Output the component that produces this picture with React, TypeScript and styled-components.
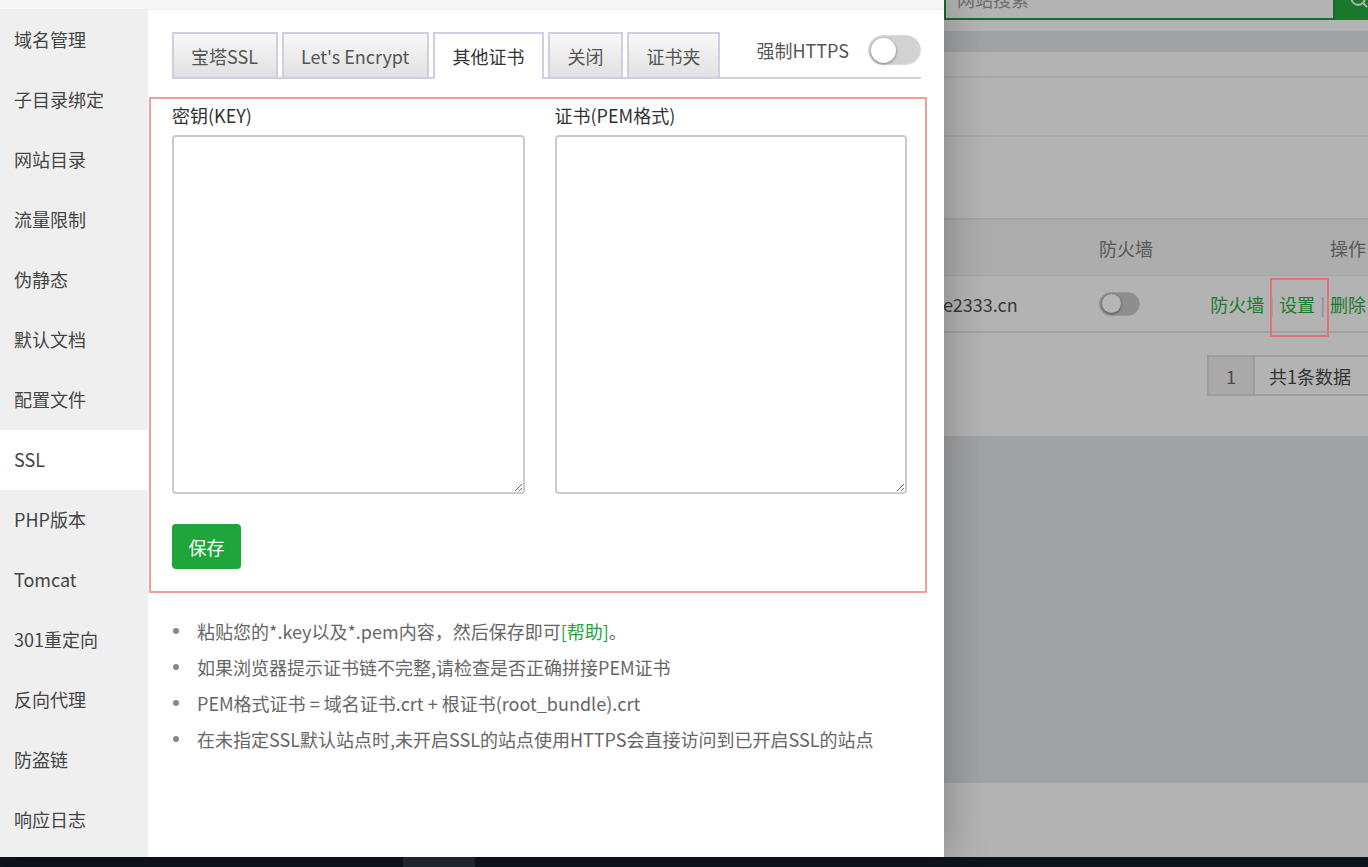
import * as React from "react";
import styled, { createGlobalStyle } from "styled-components";
import { Search } from "lucide-react";

const GlobalStyle = createGlobalStyle`
  html, body {
    margin: 0;
    padding: 0;
  }
  body {
    font-family: "Noto Sans CJK SC", "Noto Sans", sans-serif;
    background: #a0a3a5;
    overflow: hidden;
  }
  * {
    box-sizing: border-box;
  }
`;

const Shell = styled.div`
  width: 1368px;
  height: 867px;
  display: flex;
  flex-direction: column;
`;

const Main = styled.div`
  display: flex;
  height: 857px;
`;

const Modal = styled.div`
  position: relative;
  z-index: 2;
  width: 944px;
  flex: none;
  display: flex;
  flex-direction: column;
  background: #fff;
  box-shadow: 2px 0 40px rgba(0, 0, 0, 0.28);
`;

const TopStrip = styled.div`
  height: 10px;
  background: #f7f7f7;
  border-bottom: 1px solid #ececec;
`;

const ModalBody = styled.div`
  flex: 1;
  display: flex;
  min-height: 0;
`;

const Sidebar = styled.nav`
  width: 148px;
  flex: none;
  background: #efefef;
`;

const NavItem = styled.div<{ $active?: boolean }>`
  height: 60px;
  display: flex;
  align-items: center;
  padding-left: 14px;
  padding-bottom: 2px;
  font-size: 18px;
  color: #444;
  background: ${(p) => (p.$active ? "#fff" : "transparent")};
`;

const Content = styled.div`
  flex: 1;
  padding: 22px 23px 0 24px;
`;

const TabBar = styled.div`
  display: flex;
  align-items: flex-start;
  height: 47px;
  border-bottom: 2px solid #d0cee0;
`;

const Tab = styled.div<{ $active?: boolean }>`
  height: ${(p) => (p.$active ? "47px" : "45px")};
  padding: 0 18px 0 17px;
  margin-right: 4px;
  border: 2px solid #d0cee0;
  border-bottom: none;
  font-size: 18px;
  line-height: 45px;
  color: ${(p) => (p.$active ? "#333" : "#555")};
  background: ${(p) =>
    p.$active ? "#fff" : "linear-gradient(#f8f8f8, #e1e1e1)"};
  white-space: nowrap;
`;

const SwitchGroup = styled.div`
  margin-left: auto;
  margin-top: 1px;
  height: 34px;
  display: flex;
  align-items: center;
  gap: 19px;
  font-size: 18px;
  color: #555;
`;

const Toggle = styled.div<{ $dim?: boolean }>`
  width: ${(p) => (p.$dim ? "41px" : "53px")};
  height: ${(p) => (p.$dim ? "24px" : "30px")};
  border-radius: 15px;
  padding: 2px;
  display: flex;
  align-items: center;
  background: ${(p) => (p.$dim ? "#8e8e8e" : "#d2d2d2")};
  border: 1px solid ${(p) => (p.$dim ? "#999" : "#dadada")};
`;

const Knob = styled.span<{ $dim?: boolean }>`
  width: ${(p) => (p.$dim ? "19px" : "25px")};
  height: ${(p) => (p.$dim ? "19px" : "25px")};
  border-radius: 50%;
  background: ${(p) => (p.$dim ? "#b5b5b5" : "#fff")};
  box-shadow: 0 1px 3px rgba(0, 0, 0, 0.45);
`;

const FormBox = styled.div`
  margin: 18px -6px 0 -23px;
  border: 2px solid #f39c9c;
  padding: 4px 18px 22px 21px;
`;

const Fields = styled.div`
  display: grid;
  grid-template-columns: 1fr 1fr;
  gap: 30px;
`;

const Label = styled.div`
  font-size: 18px;
  line-height: 24px;
  color: #333;
  margin-bottom: 8px;
`;

const TextArea = styled.textarea`
  display: block;
  width: 100%;
  height: 359px;
  border: 2px solid #ccc;
  border-radius: 4px;
  resize: both;
  outline: none;
`;

const SaveButton = styled.button`
  margin-top: 30px;
  width: 69px;
  height: 45px;
  border: none;
  border-radius: 4px;
  background: #20a53a;
  color: #fff;
  font-family: inherit;
  font-size: 18px;
`;

const Notes = styled.ul`
  margin: 20px 0 0;
  padding: 0;
  list-style: none;
`;

const Note = styled.li`
  position: relative;
  padding-left: 25px;
  line-height: 36px;
  font-size: 18px;
  color: #666;
  white-space: nowrap;

  &::before {
    content: "";
    position: absolute;
    left: 1px;
    top: 15px;
    width: 6px;
    height: 6px;
    border-radius: 50%;
    background: #888;
  }
`;

const HelpLink = styled.span`
  color: #20a53a;
`;

/* dimmed page behind the modal */

const Backdrop = styled.div`
  flex: 1;
  min-width: 0;
  display: flex;
  flex-direction: column;
  background: #a0a3a5;
`;

const SearchRow = styled.div`
  display: flex;
  height: 42px;
  margin-top: -22px;
  flex: none;
`;

const SearchInput = styled.div`
  flex: 1;
  min-width: 0;
  border: 2px solid #1c6b2c;
  background: #b3b3b3;
  color: #6d6d6d;
  font-size: 18px;
  line-height: 38px;
  padding-left: 11px;
`;

const SearchButton = styled.div`
  width: 33px;
  flex: none;
  background: #1a782c;
  color: #b0b0b0;
  display: flex;
  align-items: center;
  padding-left: 14px;

  svg {
    flex: none;
  }
`;

const Strip = styled.div<{ $h: number; $bg: string }>`
  height: ${(p) => p.$h}px;
  background: ${(p) => p.$bg};
  flex: none;
`;

const Card = styled.div`
  height: 384px;
  flex: none;
  background: #b3b3b3;
`;

const CardRow = styled.div<{ $h: number }>`
  height: ${(p) => p.$h}px;
  border-bottom: 2px solid #a9a9a9;
`;

const TableHead = styled.div`
  margin-top: 81px;
  display: grid;
  grid-template-columns: 155px 110px minmax(0, 1fr);
  align-items: center;
  height: 58px;
  border-top: 2px solid #a2a2a2;
  border-bottom: 1px solid #a7a7a7;
  background: #adadad;
  font-size: 18px;
  color: #585858;
`;

const TableRow = styled.div`
  display: grid;
  grid-template-columns: 155px 110px minmax(0, 1fr);
  align-items: center;
  height: 57px;
  border-bottom: 2px solid #a2a2a2;
  font-size: 18px;
  color: #3a3a3a;
`;

const NameCell = styled.div`
  margin-left: -11px;
  white-space: nowrap;
`;

const OpsCell = styled.div`
  position: relative;
  text-align: right;
  padding-right: 2px;
  white-space: nowrap;
`;

const OpLink = styled.span`
  color: #1b7a2b;
`;

const Sep = styled.span`
  color: #888;
  margin: 0 5px;
`;

const Annotation = styled.span`
  position: absolute;
  left: 61px;
  top: -13px;
  width: 59px;
  height: 59px;
  border: 2px solid #e07373;
`;

const Pager = styled.div`
  margin: 22px 0 0 263px;
  display: flex;
  height: 41px;
  border: 2px solid #9d9d9d;
  border-right: none;
  font-size: 18px;
  white-space: nowrap;
`;

const PageCell = styled.div<{ $current?: boolean }>`
  display: flex;
  align-items: center;
  justify-content: center;
  padding: 0 ${(p) => (p.$current ? "17px" : "14px")};
  background: ${(p) => (p.$current ? "#a9a9a9" : "#b3b3b3")};
  color: ${(p) => (p.$current ? "#4a4a4a" : "#333")};
  border-right: ${(p) => (p.$current ? "2px solid #9d9d9d" : "none")};
`;

const Taskbar = styled.div`
  height: 10px;
  background: #0e141b;
  display: flex;
`;

const TaskItem = styled.div`
  margin-left: 403px;
  width: 72px;
  background: #252a31;
`;

const navItems = [
  "域名管理",
  "子目录绑定",
  "网站目录",
  "流量限制",
  "伪静态",
  "默认文档",
  "配置文件",
  "SSL",
  "PHP版本",
  "Tomcat",
  "301重定向",
  "反向代理",
  "防盗链",
  "响应日志",
];

const tabs = ["宝塔SSL", "Let's Encrypt", "其他证书", "关闭", "证书夹"];

const App = () => {
  return (
    <Shell>
      <GlobalStyle />
      <Main>
        <Modal>
          <TopStrip />
          <ModalBody>
            <Sidebar>
              {navItems.map((item) => (
                <NavItem key={item} $active={item === "SSL"}>
                  {item}
                </NavItem>
              ))}
            </Sidebar>
            <Content>
              <TabBar>
                {tabs.map((t) => (
                  <Tab key={t} $active={t === "其他证书"}>
                    {t}
                  </Tab>
                ))}
                <SwitchGroup>
                  强制HTTPS
                  <Toggle>
                    <Knob />
                  </Toggle>
                </SwitchGroup>
              </TabBar>

              <FormBox>
                <Fields>
                  <div>
                    <Label>密钥(KEY)</Label>
                    <TextArea />
                  </div>
                  <div>
                    <Label>证书(PEM格式)</Label>
                    <TextArea />
                  </div>
                </Fields>
                <SaveButton>保存</SaveButton>
              </FormBox>

              <Notes>
                <Note>
                  粘贴您的*.key以及*.pem内容，然后保存即可
                  <HelpLink>[帮助]</HelpLink>。
                </Note>
                <Note>如果浏览器提示证书链不完整,请检查是否正确拼接PEM证书</Note>
                <Note>PEM格式证书 = 域名证书.crt + 根证书(root_bundle).crt</Note>
                <Note>
                  在未指定SSL默认站点时,未开启SSL的站点使用HTTPS会直接访问到已开启SSL的站点
                </Note>
              </Notes>
            </Content>
          </ModalBody>
        </Modal>

        <Backdrop>
          <SearchRow>
            <SearchInput>网站搜索</SearchInput>
            <SearchButton>
              <Search size={20} strokeWidth={2.5} />
            </SearchButton>
          </SearchRow>
          <Strip $h={11} $bg="#b3b3b3" />
          <Strip $h={21} $bg="#a0a3a5" />
          <Card>
            <CardRow $h={26} />
            <CardRow $h={59} />
            <TableHead>
              <div />
              <div>防火墙</div>
              <OpsCell>操作</OpsCell>
            </TableHead>
            <TableRow>
              <NameCell>ge2333.cn</NameCell>
              <div>
                <Toggle $dim>
                  <Knob $dim />
                </Toggle>
              </div>
              <OpsCell>
                <OpLink>防火墙</OpLink>
                <Sep>|</Sep>
                <OpLink>设置</OpLink>
                <Sep>|</Sep>
                <OpLink>删除</OpLink>
                <Annotation />
              </OpsCell>
            </TableRow>
            <Pager>
              <PageCell $current>1</PageCell>
              <PageCell>共1条数据</PageCell>
            </Pager>
          </Card>
          <Strip $h={347} $bg="#a0a3a5" />
          <Strip $h={74} $bg="#b3b3b3" />
        </Backdrop>
      </Main>
      <Taskbar>
        <TaskItem />
      </Taskbar>
    </Shell>
  );
};

export default App;
